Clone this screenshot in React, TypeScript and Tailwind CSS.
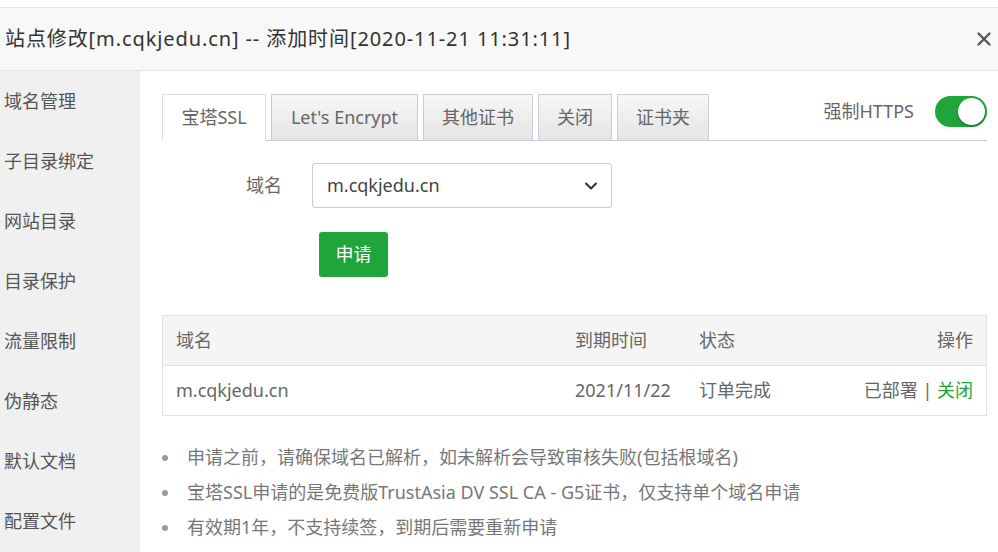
import { ChevronDown, X } from "lucide-react";

const menu = ["域名管理", "子目录绑定", "网站目录", "目录保护", "流量限制", "伪静态", "默认文档", "配置文件"];
const tabs = [
  { label: "宝塔SSL", w: "w-[104px]", active: true },
  { label: "Let's Encrypt", w: "w-[147px]" },
  { label: "其他证书", w: "w-[110px]" },
  { label: "关闭", w: "w-[74px]" },
  { label: "证书夹", w: "w-[92px]" },
];
const tips = [
  "申请之前，请确保域名已解析，如未解析会导致审核失败(包括根域名)",
  "宝塔SSL申请的是免费版TrustAsia DV SSL CA - G5证书，仅支持单个域名申请",
  "有效期1年，不支持续签，到期后需要重新申请",
];

export default function App() {
  return (
    <div className="w-[998px] h-[552px] overflow-hidden bg-white text-[#333] font-['Noto_Sans','Noto_Sans_CJK_SC',sans-serif] pt-[7px]">
      <div className="h-[64px] bg-[#f8f8f8] border-y border-[#e5e5e5] flex items-center justify-between pl-[5px] pr-[3px]">
        <span className="text-[20px] leading-none tracking-[0.9px] text-[#333]">
          站点修改[m.cqkjedu.cn] -- 添加时间[2020-11-21 11:31:11]
        </span>
        <X size={22} strokeWidth={2.5} className="text-[#555]" />
      </div>

      <div className="flex h-full">
        <div className="w-[140px] shrink-0 bg-[#f0f0f0]">
          {menu.map((m) => (
            <div key={m} className="h-[60px] flex items-center pl-[4px] text-[18px] text-[#555]">
              {m}
            </div>
          ))}
        </div>

        <div className="flex-1 pl-[22px] pr-[11px] pt-[23px]">
          <div className="flex justify-between items-start border-b border-[#ccc]">
            <div className="flex gap-[5px]">
              {tabs.map((t) => (
                <div
                  key={t.label}
                  className={`${t.w} h-[47px] -mb-px flex items-center justify-center text-[18px] text-[#666] border ${
                    t.active
                      ? "bg-white border-[#ddd] border-b-white"
                      : "bg-gradient-to-b from-[#f7f7f7] to-[#e4e4e4] border-[#ccccd8]"
                  }`}
                >
                  {t.label}
                </div>
              ))}
            </div>
            <div className="flex items-center gap-[21px] mt-[2px]">
              <span className="text-[18px] text-[#666]">强制HTTPS</span>
              <div className="w-[52px] h-[31px] rounded-full bg-[#20a53a] flex items-center justify-end pr-[2px]">
                <div className="w-[27px] h-[27px] rounded-full bg-white shadow-[0_2px_3px_rgba(0,0,0,0.25)]" />
              </div>
            </div>
          </div>

          <div className="flex items-center mt-[22px]">
            <div className="w-[120px] text-right text-[18px] text-[#666]">域名</div>
            <div className="ml-[30px] w-[300px] h-[45px] border border-[#ccc] rounded-[3px] flex items-center justify-between pl-[14px] pr-[10px] text-[18px] text-[#444]">
              <span>m.cqkjedu.cn</span>
              <ChevronDown size={20} strokeWidth={2.5} className="text-[#333]" />
            </div>
          </div>

          <button className="ml-[157px] mt-[24px] w-[69px] h-[45px] rounded-[3px] bg-[#20a53a] text-white text-[18px]">
            申请
          </button>

          <div className="mt-[38px] border border-[#e2e2e2] text-[18px] text-[#666]">
            <div className="h-[50px] bg-[#f5f5f5] border-b border-[#e2e2e2] flex items-center px-[13px]">
              <span className="w-[399px]">域名</span>
              <span className="w-[124px]">到期时间</span>
              <span className="flex-1">状态</span>
              <span>操作</span>
            </div>
            <div className="h-[49px] flex items-center px-[13px]">
              <span className="w-[399px]">m.cqkjedu.cn</span>
              <span className="w-[124px]">2021/11/22</span>
              <span className="flex-1">订单完成</span>
              <span>
                已部署 | <span className="text-[#20a53a]">关闭</span>
              </span>
            </div>
          </div>

          <ul className="mt-[24px] text-[18px] text-[#777]">
            {tips.map((t) => (
              <li key={t} className="h-[35px] flex items-center">
                <span className="w-[6px] h-[6px] rounded-full bg-[#999] mr-[19px]" />
                {t}
              </li>
            ))}
          </ul>
        </div>
      </div>
    </div>
  );
}
